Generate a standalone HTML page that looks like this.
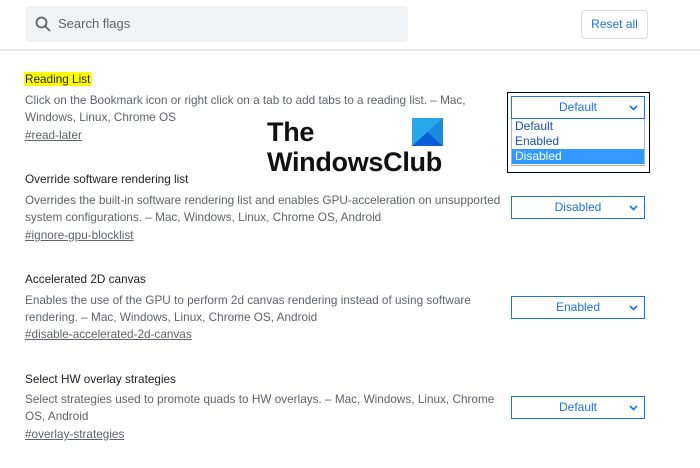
<!DOCTYPE html>
<html><head><style>
*{margin:0;padding:0;box-sizing:border-box}
body{width:700px;height:468px;background:#fff;font-family:"Liberation Sans",Arial,sans-serif;position:relative;overflow:hidden;color:#5f6368}
.abs{position:absolute}
.search{left:25px;top:6px;width:383px;height:36px;background:#f1f3f4;border-radius:4px}
.search span{position:absolute;left:33px;top:10px;font-size:13px;color:#5f6368}
.reset{left:581px;top:10px;width:67px;height:29px;border:1px solid #dadce0;border-radius:4px;color:#1a73e8;font-size:12px;text-align:center;line-height:27px}
.hr{left:0;top:49px;width:700px;height:2px;background:#e8e8e8}
.t,.d,.l{font-size:12px;left:25px;white-space:nowrap;transform:scaleX(0.98);transform-origin:left top}
.t{color:#202124}
.d{line-height:16.5px}
.l{text-decoration:underline}
.sel{left:511px;width:134px;height:23px;border:1px solid #1a73e8;color:#1a73e8;font-size:12px;text-align:center;line-height:21px}
.sel svg{position:absolute;right:6px;top:8px}
.opt{font-size:12px;height:15px;line-height:15px;padding-left:3px;color:#1a4fb0}
</style></head><body>
<div class="abs search">
<svg class="abs" style="left:10px;top:10px" width="16" height="16" viewBox="0 0 16 16"><circle cx="6.5" cy="6.5" r="5" fill="none" stroke="#5f6368" stroke-width="1.8"/><line x1="10" y1="10" x2="15" y2="15" stroke="#5f6368" stroke-width="1.8"/></svg>
<span>Search flags</span></div>
<div class="abs reset">Reset all</div>
<div class="abs hr"></div>

<div class="abs t" style="top:72px;background:#ffff00;padding:0 1px;left:24px">Reading List</div>
<div class="abs d" style="top:92px">Click on the Bookmark icon or right click on a tab to add tabs to a reading list. – Mac,<br>Windows, Linux, Chrome OS</div>
<div class="abs l" style="top:128px">#read-later</div>

<div class="abs" style="left:507px;top:92px;width:143px;height:81px;border:1px solid #000"></div>
<div class="abs sel" style="top:96px">Default<svg width="9" height="6" viewBox="0 0 9 6"><path d="M1 1L4.5 4.5L8 1" fill="none" stroke="#1a73e8" stroke-width="1.6"/></svg></div>
<div class="abs" style="left:511px;top:119px;width:134px;height:47px;border:1px solid #9fb7d9;border-top:none;background:#fff">
<div class="opt">Default</div><div class="opt">Enabled</div><div class="opt" style="background:#3399ff;color:#fff">Disabled</div></div>

<div class="abs" style="left:267px;top:117px;font-size:27px;font-weight:bold;color:#111;line-height:30px;letter-spacing:-0.3px">The<br>WindowsClub</div>
<svg class="abs" style="left:412px;top:118px" width="31" height="28" viewBox="0 0 31 28"><polygon points="0,0 31,0 31,28 0,28" fill="#28a8ea"/><polygon points="0,28 15.5,14 31,28" fill="#0b5fd6"/><polygon points="31,0 15.5,14 31,28" fill="#1b8ae0"/></svg>

<div class="abs t" style="top:172px">Override software rendering list</div>
<div class="abs d" style="top:192px">Overrides the built-in software rendering list and enables GPU-acceleration on unsupported<br>system configurations. – Mac, Windows, Linux, Chrome OS, Android</div>
<div class="abs l" style="top:228px">#ignore-gpu-blocklist</div>
<div class="abs sel" style="top:196px">Disabled<svg width="9" height="6" viewBox="0 0 9 6"><path d="M1 1L4.5 4.5L8 1" fill="none" stroke="#1a73e8" stroke-width="1.6"/></svg></div>

<div class="abs t" style="top:272px">Accelerated 2D canvas</div>
<div class="abs d" style="top:292px">Enables the use of the GPU to perform 2d canvas rendering instead of using software<br>rendering. – Mac, Windows, Linux, Chrome OS, Android</div>
<div class="abs l" style="top:327px">#disable-accelerated-2d-canvas</div>
<div class="abs sel" style="top:296px">Enabled<svg width="9" height="6" viewBox="0 0 9 6"><path d="M1 1L4.5 4.5L8 1" fill="none" stroke="#1a73e8" stroke-width="1.6"/></svg></div>

<div class="abs t" style="top:372px">Select HW overlay strategies</div>
<div class="abs d" style="top:391px">Select strategies used to promote quads to HW overlays. – Mac, Windows, Linux, Chrome<br>OS, Android</div>
<div class="abs l" style="top:427px">#overlay-strategies</div>
<div class="abs sel" style="top:396px">Default<svg width="9" height="6" viewBox="0 0 9 6"><path d="M1 1L4.5 4.5L8 1" fill="none" stroke="#1a73e8" stroke-width="1.6"/></svg></div>
</body></html>
